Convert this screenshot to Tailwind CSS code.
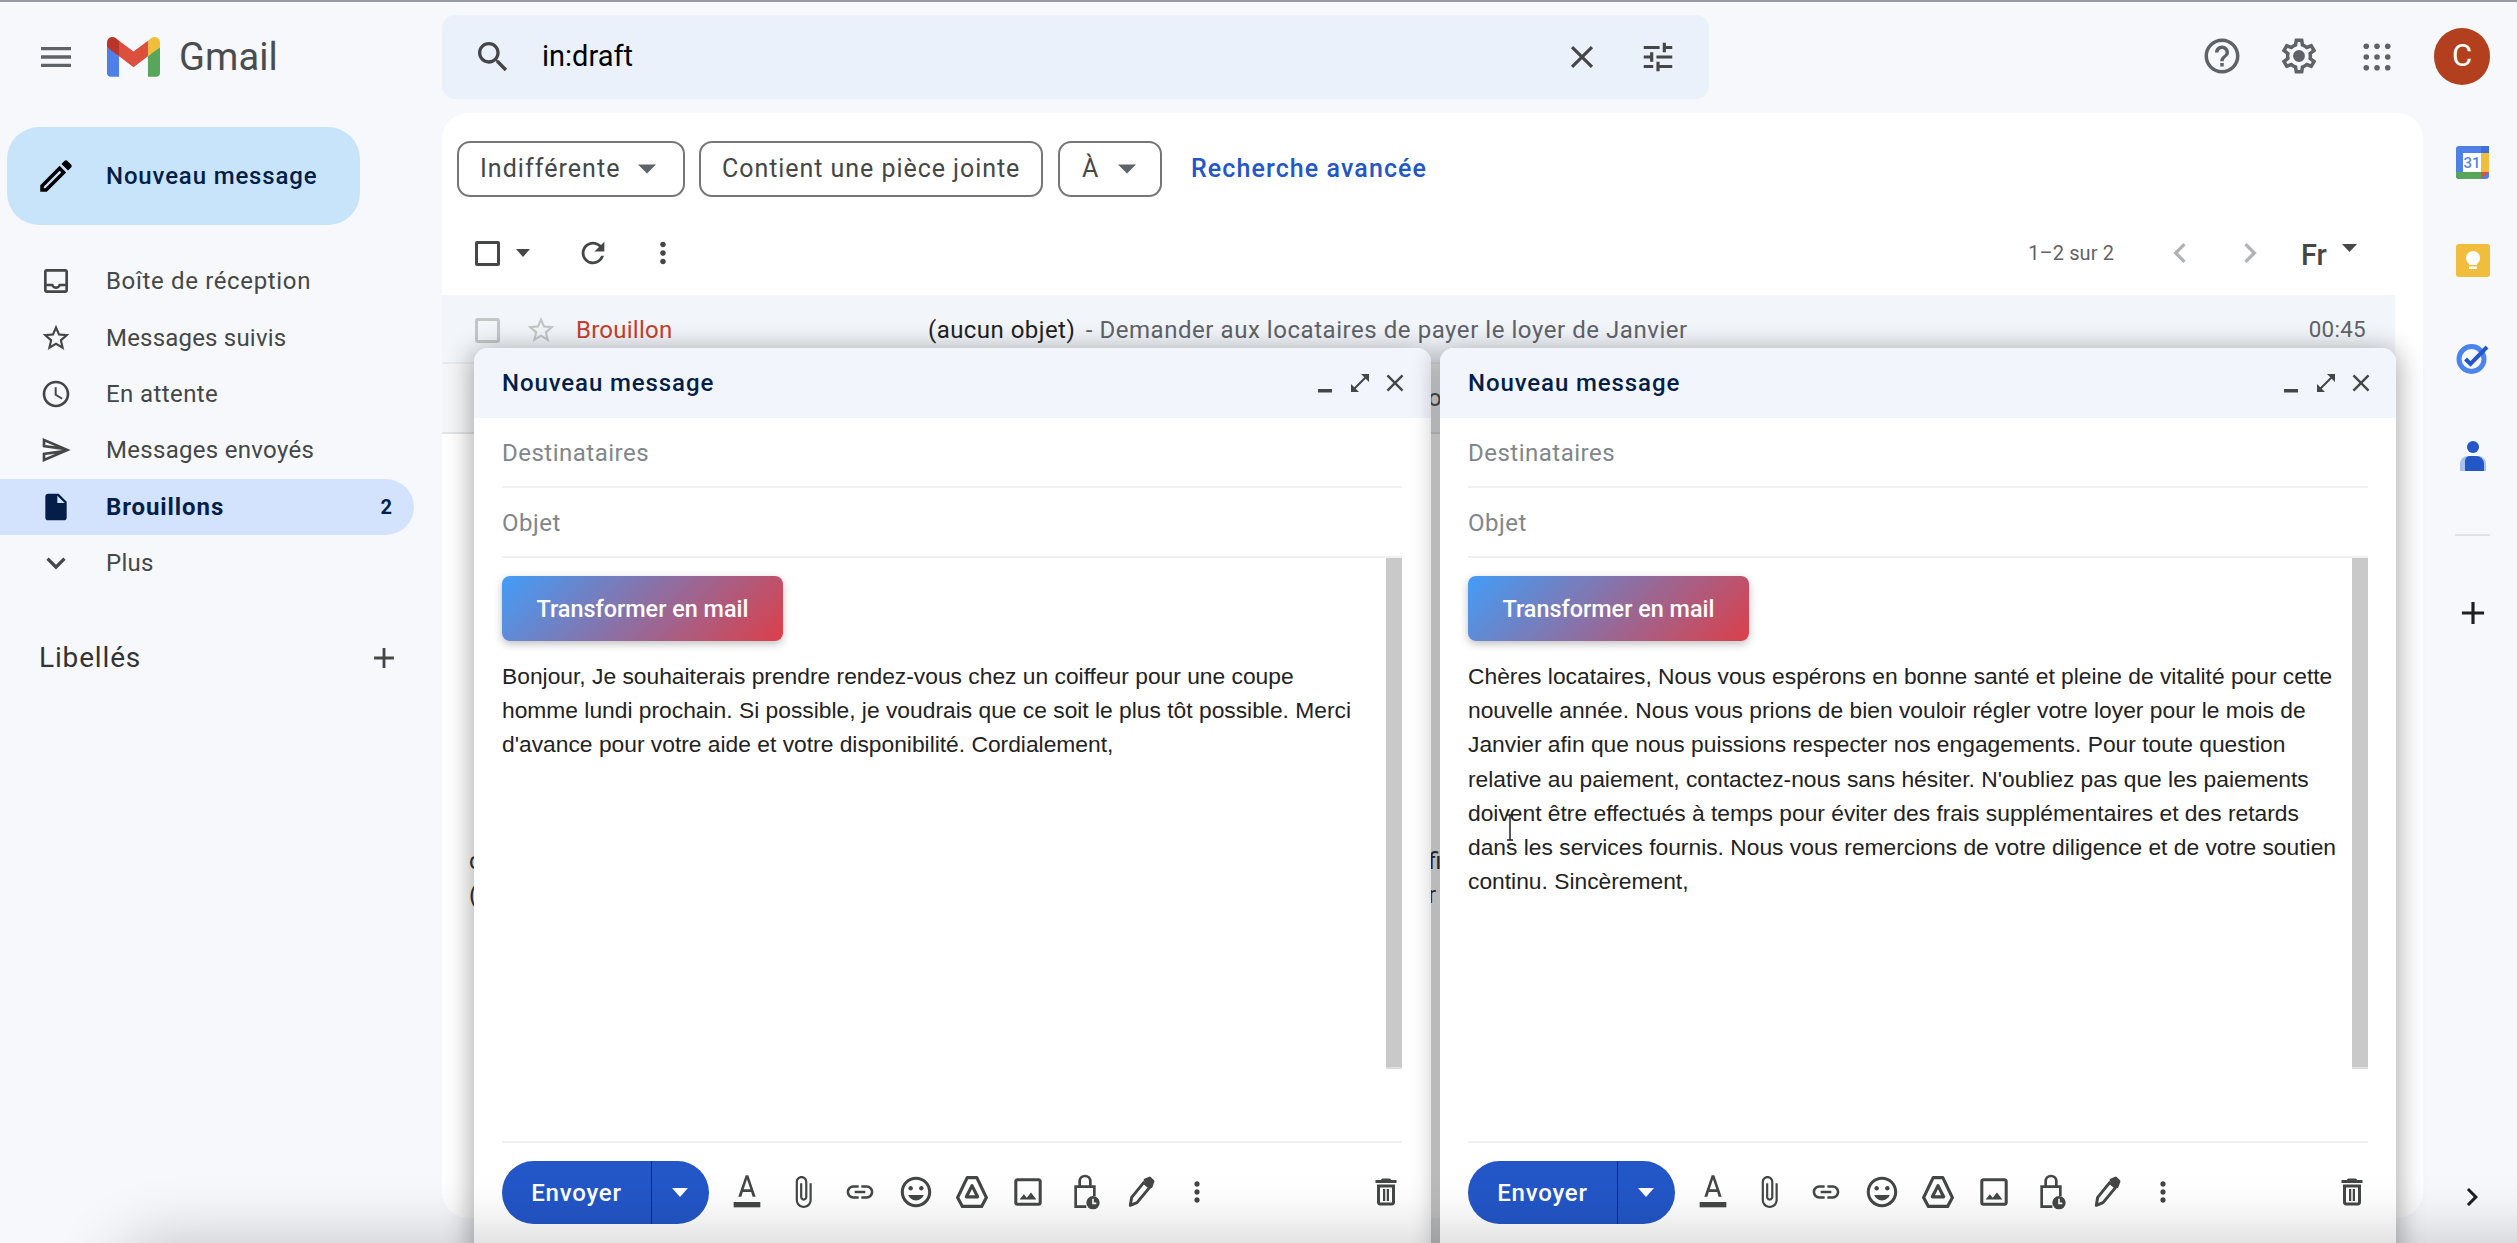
<!DOCTYPE html>
<html lang="fr">
<head>
<meta charset="utf-8">
<title>Gmail</title>
<script src="https://cdn.jsdelivr.net/npm/@tailwindcss/browser@4"></script>
</head>
<body class="m-0">
<div class="relative w-[2517px] h-[1243px] overflow-hidden bg-[#f6f8fc] font-['Roboto',sans-serif] text-[22.4px] text-[#444746]">
  <div class="h-[2px] bg-[#9a9aa2]"></div>

  <!-- top bar -->
  <header class="flex h-[111px]">
    <div class="w-[442px] flex items-center pl-[36px] pb-[2px] shrink-0">
      <svg class="w-[40px] h-[40px] text-[#5f6368]" viewBox="0 0 24 24" fill="currentColor"><path d="M3 18h18v-2H3v2zm0-5h18v-2H3v2zm0-7v2h18V6H3z"/></svg>
      <svg class="w-[53px] h-[40px] ml-[31px]" viewBox="0 0 256 193"><path fill="#4f80e8" d="M58.182 192.05V93.14L27.507 65.077 0 49.504V174.595c0 9.658 7.825 17.455 17.455 17.455h40.727z"/><path fill="#58a55c" d="M197.818 192.05h40.727c9.659 0 17.455-7.826 17.455-17.455V49.504l-31.156 17.837-27.026 25.798v98.911z"/><path fill="#dc4f3d" d="M58.182 93.14l-4.174-38.647 4.174-36.989L128 69.868l69.818-52.364 4.669 34.992-4.669 40.644L128 145.504z"/><path fill="#f1bd3c" d="M197.818 17.504V93.14L256 49.504V26.231c0-21.585-24.64-33.89-41.89-20.945l-16.292 12.218z"/><path fill="#b9352b" d="M0 49.504l26.759 20.07L58.182 93.14V17.504L41.89 5.286C24.61-7.66 0 4.646 0 26.231v23.273z"/></svg>
      <span class="ml-[19px] text-[38px] leading-none text-[#4a4d50] tracking-[0.1px]">Gmail</span>
    </div>
    <div class="mt-[13px] w-[1267px] h-[84px] rounded-[13px] bg-[#eaf1fb] flex items-center pl-[31px] pr-[32px] shrink-0">
      <svg class="w-[40px] h-[40px] text-[#444746]" viewBox="0 0 24 24" fill="currentColor"><path d="M15.5 14h-.79l-.28-.27C15.41 12.59 16 11.11 16 9.5 16 5.91 13.09 3 9.5 3S3 5.91 3 9.5 5.91 16 9.5 16c1.61 0 3.09-.59 4.23-1.57l.27.28v.79l5 4.99L20.49 19l-4.99-5zm-6 0C7.01 14 5 11.99 5 9.5S7.01 5 9.5 5 14 7.01 14 9.5 11.99 14 9.5 14z"/></svg>
      <span class="ml-[29px] text-[29px] text-black">in:draft</span>
      <svg class="ml-auto w-[38px] h-[38px] text-[#444746]" viewBox="0 0 24 24" fill="currentColor"><path d="M19 6.41L17.59 5 12 10.59 6.41 5 5 6.41 10.59 12 5 17.59 6.41 19 12 13.41 17.59 19 19 17.59 13.41 12z"/></svg>
      <svg class="ml-[38px] w-[38px] h-[38px] text-[#444746]" viewBox="0 0 24 24" fill="currentColor"><path d="M3 17v2h6v-2H3zM3 5v2h10V5H3zm10 16v-2h8v-2h-8v-2h-2v6h2zM7 9v2H3v2h4v2h2V9H7zm14 4v-2H11v2h10zm-6-4h2V7h4V5h-4V3h-2v6z"/></svg>
    </div>
    <div class="flex-1 relative">
      <svg class="absolute left-[492px] top-[33px] w-[42px] h-[42px] text-[#5f6368]" viewBox="0 0 24 24" fill="currentColor"><path d="M11 18h2v-2h-2v2zm1-16C6.48 2 2 6.48 2 12s4.48 10 10 10 10-4.48 10-10S17.52 2 12 2zm0 18c-4.41 0-8-3.59-8-8s3.59-8 8-8 8 3.59 8 8-3.59 8-8 8zm0-14c-2.21 0-4 1.79-4 4h2c0-1.1.9-2 2-2s2 .9 2 2c0 2-3 1.75-3 5h2c0-2.25 3-2.5 3-5 0-2.21-1.79-4-4-4z"/></svg>
      <svg class="absolute left-[569px] top-[33px] w-[42px] h-[42px] text-[#5f6368]" viewBox="0 0 24 24" fill="currentColor"><path d="M19.43 12.98c.04-.32.07-.64.07-.98 0-.34-.03-.66-.07-.98l2.11-1.65c.19-.15.24-.42.12-.64l-2-3.46c-.09-.16-.26-.25-.44-.25-.06 0-.12.01-.17.03l-2.49 1c-.52-.4-1.08-.73-1.69-.98l-.38-2.65C14.46 2.18 14.25 2 14 2h-4c-.25 0-.46.18-.49.42l-.38 2.65c-.61.25-1.17.59-1.69.98l-2.49-1c-.06-.02-.12-.03-.18-.03-.17 0-.34.09-.43.25l-2 3.46c-.13.22-.07.49.12.64l2.11 1.65c-.04.32-.07.65-.07.98 0 .33.03.66.07.98l-2.11 1.65c-.19.15-.24.42-.12.64l2 3.46c.09.16.26.25.44.25.06 0 .12-.01.17-.03l2.49-1c.52.4 1.08.73 1.69.98l.38 2.65c.03.24.24.42.49.42h4c.25 0 .46-.18.49-.42l.38-2.65c.61-.25 1.17-.59 1.69-.98l2.49 1c.06.02.12.03.18.03.17 0 .34-.09.43-.25l2-3.46c.12-.22.07-.49-.12-.64l-2.11-1.65zm-1.98-1.71c.04.31.05.52.05.73 0 .21-.02.43-.05.73l-.14 1.13.89.7 1.08.84-.7 1.21-1.27-.51-1.04-.42-.9.68c-.43.32-.84.56-1.25.73l-1.06.43-.16 1.13-.2 1.35h-1.4l-.19-1.35-.16-1.13-1.06-.43c-.43-.18-.83-.41-1.23-.71l-.91-.7-1.06.43-1.27.51-.7-1.21 1.08-.84.89-.7-.14-1.13c-.03-.31-.05-.54-.05-.74s.02-.43.05-.73l.14-1.13-.89-.7-1.08-.84.7-1.21 1.27.51 1.04.42.9-.68c.43-.32.84-.56 1.25-.73l1.06-.43.16-1.13.2-1.35h1.39l.19 1.35.16 1.13 1.06.43c.43.18.83.41 1.23.71l.91.7 1.06-.43 1.27-.51.7 1.21-1.07.85-.89.7.14 1.13zM12 8.6a3.4 3.4 0 1 0 0 6.8 3.4 3.4 0 0 0 0-6.8z"/></svg>
      <svg class="absolute left-[654px] top-[41px] w-[28px] h-[28px] text-[#5f6368]" viewBox="0 0 30 30" fill="currentColor"><circle cx="3.5" cy="3.5" r="3"/><circle cx="15" cy="3.5" r="3"/><circle cx="26.5" cy="3.5" r="3"/><circle cx="3.5" cy="15" r="3"/><circle cx="15" cy="15" r="3"/><circle cx="26.5" cy="15" r="3"/><circle cx="3.5" cy="26.5" r="3"/><circle cx="15" cy="26.5" r="3"/><circle cx="26.5" cy="26.5" r="3"/></svg>
      <div class="absolute left-[725px] top-[26px] w-[56px] h-[57px] rounded-full bg-[#b23f1d] text-white flex items-center justify-center text-[31px]">C</div>
    </div>
  </header>

  <div class="flex h-[1105px]">
    <!-- sidebar -->
    <aside class="w-[442px] shrink-0 pt-[14px]">
      <div class="ml-[7px] w-[353px] h-[98px] rounded-[32px] bg-[#c8e4fb] flex items-center pl-[28px] text-[#041e49] font-medium">
        <svg class="w-[42px] h-[42px] text-black" viewBox="0 0 24 24" fill="currentColor"><path d="M14.06 9.02l.92.92L5.92 19H5v-.92l9.06-9.06M17.66 3c-.25 0-.51.1-.7.29l-1.83 1.83 3.75 3.75 1.83-1.83c.39-.39.39-1.02 0-1.41l-2.34-2.34c-.2-.2-.45-.29-.71-.29zm-3.6 3.19L3 17.25V21h3.75L17.81 9.94l-3.75-3.75z"/></svg>
        <span class="ml-[29px] text-[24px] tracking-[0.85px]">Nouveau message</span>
      </div>
      <nav class="mt-[28px] pr-[28px]">
        <div class="flex items-center h-[56.4px] pl-[40px] text-[#444746]"><svg class="w-[32px] h-[32px]" viewBox="0 0 24 24" fill="currentColor"><path d="M19 3H5c-1.1 0-2 .9-2 2v14c0 1.1.9 2 2 2h14c1.1 0 2-.9 2-2V5c0-1.1-.9-2-2-2zm0 16H5v-3h3.56c.69 1.19 1.97 2 3.45 2s2.75-.81 3.44-2H19v3zm0-5h-4.99c0 1.1-.9 2-2 2s-2-.9-2-2H5V5h14v9z"/></svg><span class="ml-[34px] text-[24px] tracking-[0.65px]">Boîte de réception</span></div>
        <div class="flex items-center h-[56.4px] pl-[40px] text-[#444746]"><svg class="w-[32px] h-[32px]" viewBox="0 0 24 24" fill="currentColor"><path d="M22 9.24l-7.19-.62L12 2 9.19 8.63 2 9.24l5.46 4.73L5.82 21 12 17.27 18.18 21l-1.63-7.03L22 9.24zM12 15.4l-3.76 2.27 1-4.28-3.32-2.88 4.38-.38L12 6.1l1.71 4.04 4.38.38-3.32 2.88 1 4.28L12 15.4z"/></svg><span class="ml-[34px] text-[24px] tracking-[0.2px]">Messages suivis</span></div>
        <div class="flex items-center h-[56.4px] pl-[40px] text-[#444746]"><svg class="w-[32px] h-[32px]" viewBox="0 0 24 24" fill="currentColor"><path d="M11.99 2C6.47 2 2 6.48 2 12s4.47 10 9.99 10C17.52 22 22 17.52 22 12S17.52 2 11.99 2zM12 20c-4.42 0-8-3.58-8-8s3.58-8 8-8 8 3.58 8 8-3.58 8-8 8zm.5-13H11v6l5.25 3.15.75-1.23-4.5-2.67z"/></svg><span class="ml-[34px] text-[24px] tracking-[0.4px]">En attente</span></div>
        <div class="flex items-center h-[56.4px] pl-[40px] text-[#444746]"><svg class="w-[32px] h-[32px]" viewBox="0 0 24 24" fill="currentColor"><path d="M4.01 6.03l7.51 3.22-7.52-1 .01-2.22m7.5 8.72L4 17.97v-2.22l7.51-1M2.01 3L2 10l15 2-15 2 .01 7L23 12 2.01 3z"/></svg><span class="ml-[34px] text-[24px] tracking-[0.3px]">Messages envoyés</span></div>
        <div class="flex items-center h-[56.4px] pl-[40px] pr-[22px] rounded-r-full bg-[#d3e3fd] text-[#041e49] font-bold"><svg class="w-[32px] h-[32px]" viewBox="0 0 24 24" fill="currentColor"><path d="M6 2c-1.1 0-2 .9-2 2v16c0 1.1.9 2 2 2h12c1.1 0 2-.9 2-2V8l-6-6H6zm7 7V3.5L18.5 9H13z"/></svg><span class="ml-[34px] text-[24px] tracking-[0.9px]">Brouillons</span><span class="ml-auto text-[20px]">2</span></div>
        <div class="flex items-center h-[56.4px] pl-[40px] text-[#444746]"><svg class="w-[32px] h-[32px]" viewBox="2 2 20 20" fill="currentColor"><path d="M16.59 8.59L12 13.17 7.41 8.59 6 10l6 6 6-6z"/></svg><span class="ml-[34px] text-[24px] tracking-[0.3px]">Plus</span></div>
      </nav>
      <div class="mt-[47px] pl-[39px] pr-[42px] flex items-center justify-between h-[40px]">
        <span class="text-[28px] tracking-[0.85px] text-[#333]">Libellés</span>
        <svg class="w-[34px] h-[34px] text-[#444746] mr-[-1px]" viewBox="0 0 24 24" fill="currentColor"><path d="M19 13h-6v6h-2v-6H5v-2h6V5h2v6h6v2z"/></svg>
      </div>
    </aside>

    <!-- main panel -->
    <main class="relative w-[1981px] h-[1105px] bg-white rounded-[26px] shrink-0">
      <div class="flex items-center pt-[28px] pl-[15px] gap-[14px]">
        <div class="w-[228px] h-[56px] rounded-[13px] border-2 border-[#747775] flex items-center pl-[21px] tracking-[1.05px] text-[25px] whitespace-nowrap">Indifférente<svg class="ml-[18px] w-[18px] h-[10px] text-[#5f6368]" viewBox="0 0 20 10" fill="currentColor"><path d="M0 0h20L10 10z"/></svg></div>
        <div class="w-[344px] h-[56px] rounded-[13px] border-2 border-[#747775] flex items-center pl-[21px] tracking-[0.95px] text-[25px] whitespace-nowrap">Contient une pièce jointe</div>
        <div class="w-[104px] h-[56px] ml-[1px] rounded-[13px] border-2 border-[#747775] flex items-center pl-[22px] text-[25px]">À<svg class="ml-[20px] w-[18px] h-[10px] text-[#5f6368]" viewBox="0 0 20 10" fill="currentColor"><path d="M0 0h20L10 10z"/></svg></div>
        <span class="ml-[15px] text-[#2356c7] font-medium text-[25px] tracking-[1.1px]">Recherche avancée</span>
      </div>
      <div class="flex items-center h-[42px] mt-[35px] pl-[33px] relative">
        <div class="w-[25px] h-[25px] rounded-[2px] border-[3px] border-[#444746]"></div>
        <svg class="ml-[16px] w-[14px] h-[8px] text-[#444746]" viewBox="0 0 14 8" fill="currentColor"><path d="M0 0h14L7 8z"/></svg>
        <svg class="ml-[46px] w-[34px] h-[34px] text-[#444746]" viewBox="0 0 24 24" fill="currentColor"><path d="M17.65 6.35C16.2 4.9 14.21 4 12 4c-4.42 0-7.99 3.58-7.99 8s3.57 8 7.99 8c3.73 0 6.84-2.55 7.73-6h-2.08c-.82 2.33-3.04 4-5.65 4-3.31 0-6-2.69-6-6s2.69-6 6-6c1.66 0 3.14.69 4.22 1.78L13 11h7V4l-2.35 2.35z"/></svg>
        <svg class="ml-[36px] w-[34px] h-[34px] text-[#444746]" viewBox="0 0 24 24" fill="currentColor"><path d="M12 8c1.1 0 2-.9 2-2s-.9-2-2-2-2 .9-2 2 .9 2 2 2zm0 2c-1.1 0-2 .9-2 2s.9 2 2 2 2-.9 2-2-.9-2-2-2zm0 6c-1.1 0-2 .9-2 2s.9 2 2 2 2-.9 2-2-.9-2-2-2z"/></svg>
        <span class="ml-auto text-[20px] text-[#5f6368] tracking-[0.1px]">1–2 sur 2</span>
        <svg class="ml-[46px] w-[40px] h-[40px] text-[#b0b3b6]" viewBox="0 0 24 24" fill="currentColor"><path d="M15.41 7.41L14 6l-6 6 6 6 1.41-1.41L10.83 12z"/></svg>
        <svg class="ml-[30px] w-[40px] h-[40px] text-[#b0b3b6]" viewBox="0 0 24 24" fill="currentColor"><path d="M10 6L8.59 7.41 13.17 12l-4.58 4.59L10 18l6-6z"/></svg>
        <span class="ml-[31px] w-[30px] flex items-center text-[29px] font-medium text-[#444746] leading-none whitespace-nowrap mt-[4px]">Fr</span>
        <svg class="ml-[11px] mb-[10px] w-[15px] h-[8px] text-[#444746]" viewBox="0 0 15 8" fill="currentColor"><path d="M0 0h15L7.5 8z"/></svg>
        <span class="w-[66px]"></span>
      </div>
      <div class="mt-[21px] w-[1953px] h-[69px] bg-[#f2f5fa] flex items-center pl-[33px] pt-[3px] border-b-2 border-[#e8eaed]">
        <div class="w-[25px] h-[25px] rounded-[3px] border-[3px] border-[#c4c7c5]"></div>
        <svg class="ml-[25px] w-[32px] h-[32px] text-[#c4c7c5]" viewBox="0 0 24 24" fill="currentColor"><path d="M22 9.24l-7.19-.62L12 2 9.19 8.63 2 9.24l5.46 4.73L5.82 21 12 17.27 18.18 21l-1.63-7.03L22 9.24zM12 15.4l-3.76 2.27 1-4.28-3.32-2.88 4.38-.38L12 6.1l1.71 4.04 4.38.38-3.32 2.88 1 4.28L12 15.4z"/></svg>
        <span class="ml-[19px] w-[352px] text-[#c5402e] text-[24px] tracking-[0.25px]">Brouillon</span>
        <span class="text-[#1f1f1f] text-[24px] tracking-[0.45px]">(aucun objet)</span>
        <span class="ml-[4px] text-[#5f6368] text-[24px] tracking-[0.55px] whitespace-pre"> - Demander aux locataires de payer le loyer de Janvier</span>
        <span class="ml-auto mr-[29px] text-[#5f6368] text-[22.4px] tracking-[0.3px]">00:45</span>
      </div>
      <div class="w-[1953px] h-[70px] bg-[#f5f6f7] border-b-2 border-[#e3e4e6] flex items-center pl-[986px] text-[24px] text-[#555]">oc</div>
      <div class="absolute left-[986px] top-[731px] text-[24px] leading-[34px] text-[#333] whitespace-pre">fi
r</div>
      <div class="absolute left-[27px] top-[731px] text-[24px] leading-[34px] text-[#333] whitespace-pre">c
(</div>
    </main>

    <!-- right rail -->
    <aside class="flex-1 flex flex-col items-center pt-[33px] pl-[5px] relative">
      <svg class="w-[33px] h-[33px]" viewBox="0 0 33 33"><rect width="33" height="33" rx="3" fill="#4f80e8"/><rect x="24" y="7" width="9" height="19" fill="#f1bd3c"/><path d="M0 26h25v7H3a3 3 0 0 1-3-3z" fill="#58a55c"/><path d="M25 26h8l-8 7z" fill="#d9533f"/><rect x="25" width="8" height="7" fill="#3f6fd8"/><rect x="7" y="7" width="18" height="19" fill="#fff"/><text x="16" y="22" text-anchor="middle" font-family="Roboto" font-size="15" font-weight="500" fill="#5b85da">31</text></svg>
      <svg class="w-[34px] h-[33px] mt-[65px]" viewBox="0 0 34 33"><rect width="34" height="33" rx="3" fill="#f1bd3c"/><circle cx="17" cy="14" r="7" fill="#fff"/><rect x="13" y="18" width="8" height="3" fill="#fff"/><rect x="13" y="22.500" width="8" height="2.500" fill="#fff"/></svg>
      <svg class="w-[34px] h-[32px] mt-[65px]" viewBox="0 0 34 32"><circle cx="15.500" cy="17" r="12.500" fill="none" stroke="#4a84ee" stroke-width="5"/><path d="M9.500 17l5 5L31 5" fill="none" stroke="#2356c7" stroke-width="4"/></svg>
      <svg class="w-[26px] h-[30px] mt-[67px]" viewBox="0 0 26 30"><circle cx="13" cy="6" r="6" fill="#2356c7"/><path d="M8 15h10a8 8 0 0 1 8 8v7H0v-7a8 8 0 0 1 8-8z" fill="#a9bff0"/><path d="M10 15h6a8 8 0 0 1 8 8v7H5v-10a5 5 0 0 1 5-5z" fill="#2356c7"/></svg>
      <div class="w-[35px] h-[2px] bg-[#e0e2e6] mt-[63px]"></div>
      <svg class="w-[38px] h-[38px] mt-[58px] text-[#1f1f1f]" viewBox="0 0 24 24" fill="currentColor"><path d="M19 13h-6v6h-2v-6H5v-2h6V5h2v6h6v2z"/></svg>
      <svg class="absolute left-[31px] top-[1066px] w-[36px] h-[36px] text-[#1f1f1f]" viewBox="0 0 24 24" fill="currentColor"><path d="M10 6L8.59 7.41 13.17 12l-4.58 4.59L10 18l6-6z"/></svg>
    </aside>
  </div>

  <!-- compose window 1 -->
  <section class="absolute left-[474px] top-[348px] w-[957px] h-[920px] bg-white rounded-t-[14px] shadow-[0_4px_26px_3px_rgba(0,0,0,0.32)] flex flex-col">
    <div class="h-[70px] shrink-0 bg-[#f2f6fc] rounded-t-[14px] flex items-center pl-[28px] pr-[24px] text-[#041e49] font-medium">
      <span class="text-[24px] tracking-[0.9px]">Nouveau message</span>
      <div class="ml-auto flex items-center gap-[11px] text-[#444746]">
        <svg class="w-[24px] h-[24px]" viewBox="0 0 24 24" fill="currentColor"><rect x="5" y="18" width="14" height="3.500"/></svg>
        <svg class="w-[24px] h-[24px]" viewBox="0 0 24 24" fill="currentColor"><path d="M21 11V3h-8l3.290 3.290-10 10L3 13v8h8l-3.290-3.290 10-10z"/></svg>
        <svg class="w-[24px] h-[24px]" viewBox="2 2 20 20" fill="currentColor"><path d="M19 6.410L17.590 5 12 10.590 6.410 5 5 6.410 10.590 12 5 17.590 6.410 19 12 13.410 17.590 19 19 17.590 13.410 12z"/></svg>
      </div>
    </div>
    <div class="ml-[28px] mr-[29px] h-[70px] pt-[2px] shrink-0 border-b-2 border-[#f0f0f0] flex items-center text-[24px] tracking-[0.5px] text-[#80868b]">Destinataires</div>
    <div class="ml-[28px] mr-[29px] h-[70px] pt-[2px] shrink-0 border-b-2 border-[#f0f0f0] flex items-center text-[24px] tracking-[0.5px] text-[#80868b]">Objet</div>
    <div class="ml-[28px] mr-[29px] h-[511px] shrink-0 flex">
      <div class="flex-1 pt-[18px]">
        <div class="w-[281px] h-[65px] pt-[2px] rounded-[8px] bg-[linear-gradient(135deg,#429df8,#dc3f4a)] shadow-[0_3px_8px_rgba(0,0,0,0.25)] flex items-center justify-center text-white text-[23.4px] font-medium">Transformer en mail</div>
        <p class="mt-[18px] font-['Liberation_Sans',sans-serif] text-[22.8px] leading-[34.2px] text-[#222] whitespace-nowrap">Bonjour, Je souhaiterais prendre rendez-vous chez un coiffeur pour une coupe<br>homme lundi prochain. Si possible, je voudrais que ce soit le plus tôt possible. Merci<br>d'avance pour votre aide et votre disponibilité. Cordialement,</p>
      </div>
      <div class="w-[16px] bg-[#c9c9c9] border-b-2 border-[#dcdcdc]"></div>
    </div>
    <div class="ml-[28px] mr-[29px] mt-[72px] border-t-2 border-[#f0f0f0] pt-[18px] flex items-center">
      <div class="w-[207px] h-[63px] rounded-full bg-[#2356c7] text-white flex items-center font-medium shrink-0">
        <span class="w-[150px] h-full flex items-center justify-center text-[24px] tracking-[0.8px] border-r border-[#0f2c6e]">Envoyer</span>
        <svg class="ml-[20px] w-[16px] h-[9px]" viewBox="0 0 16 9" fill="currentColor"><path d="M0 0h16L8 9z"/></svg>
      </div>
      <div class="flex-1 flex items-center gap-[24.3px] ml-[22px] mb-[2px] text-[#444746]">
        <svg class="w-[32px] h-[36px]" viewBox="0 0 24 27" fill="currentColor"><path d="M2 21h20v4H2z"/><path d="M11 1L5.500 17h2.250l1.120-3.500h6.250l1.120 3.500h2.250L13 1h-2zm-1.500 10.500L12 4l2.500 7.500h-5z"/></svg>
        <svg class="w-[32px] h-[36px]" viewBox="1 0 22 24" fill="currentColor"><path d="M16.500 6v11.500c0 2.210-1.790 4-4 4s-4-1.790-4-4V5c0-1.380 1.120-2.500 2.500-2.500s2.500 1.120 2.500 2.500v10.500c0 .55-.45 1-1 1s-1-.45-1-1V6H10v9.500c0 1.380 1.120 2.500 2.500 2.500s2.500-1.120 2.500-2.500V5c0-2.210-1.790-4-4-4S7 2.790 7 5v12.500c0 3.040 2.460 5.500 5.500 5.500s5.500-2.460 5.500-5.500V6h-1.500z"/></svg>
        <svg class="w-[32px] h-[32px]" viewBox="0 0 24 24" fill="currentColor"><path d="M3.900 12c0-1.710 1.390-3.100 3.100-3.100h4V7H7c-2.760 0-5 2.240-5 5s2.240 5 5 5h4v-1.900H7c-1.710 0-3.100-1.390-3.100-3.100zM8 13h8v-2H8v2zm9-6h-4v1.900h4c1.710 0 3.100 1.390 3.100 3.100s-1.390 3.100-3.100 3.100h-4V17h4c2.760 0 5-2.240 5-5s-2.240-5-5-5z"/></svg>
        <svg class="w-[32px] h-[34px]" viewBox="1.500 1.500 21 21" fill="currentColor"><path d="M11.990 2C6.470 2 2 6.480 2 12s4.470 10 9.990 10C17.520 22 22 17.520 22 12S17.520 2 11.990 2zM12 20c-4.420 0-8-3.580-8-8s3.580-8 8-8 8 3.580 8 8-3.580 8-8 8zm3.500-9c.83 0 1.500-.67 1.500-1.500S16.330 8 15.500 8 14 8.670 14 9.500s.67 1.500 1.500 1.500zm-7 0c.83 0 1.500-.67 1.500-1.500S9.330 8 8.500 8 7 8.670 7 9.500 7.670 11 8.500 11zm3.500 6.500c2.330 0 4.310-1.460 5.110-3.500H6.890c.8 2.040 2.780 3.500 5.110 3.500z"/></svg>
        <svg class="w-[32px] h-[32px]" viewBox="2 2 20 20" fill="none" stroke="currentColor" stroke-width="2" stroke-linejoin="round"><path d="M9 3h6l6 12.500-3 5.500H6l-3-5.500z"/><path d="M12 8l3.500 7h-7z"/></svg>
        <svg class="w-[32px] h-[34px]" viewBox="1.500 1.500 21 21" fill="currentColor"><path d="M19 3H5c-1.100 0-2 .9-2 2v14c0 1.100.9 2 2 2h14c1.100 0 2-.9 2-2V5c0-1.100-.9-2-2-2zm0 16H5V5h14v14zm-5.040-6.710l-2.750 3.540-1.960-2.360L6.500 17h11l-3.540-4.710z"/></svg>
        <svg class="w-[32px] h-[38px]" viewBox="0 0 24 28" fill="none" stroke="currentColor" stroke-width="2"><path d="M8 10V6a4 4 0 0 1 8 0v4"/><path d="M13 25H5V10h14v7"/><circle cx="18" cy="22" r="5" fill="currentColor" stroke="none"/><path d="M18 19v3.500h2.500" stroke="#fff" stroke-width="1.200"/></svg>
        <svg class="w-[32px] h-[34px]" viewBox="0 0 24 24" fill="none" stroke="currentColor" stroke-width="2.200" stroke-linejoin="round"><path d="M4 22l1-6L14 5l4.500 3.500L9 20z"/><path d="M15 3l3.500-1.500L21 4l-1.500 4z" fill="currentColor"/></svg>
        <svg class="w-[32px] h-[32px]" viewBox="0 0 24 24" fill="currentColor"><path d="M12 8c1.100 0 2-.9 2-2s-.9-2-2-2-2 .9-2 2 .9 2 2 2zm0 2c-1.100 0-2 .9-2 2s.9 2 2 2 2-.9 2-2-.9-2-2-2zm0 6c-1.100 0-2 .9-2 2s.9 2 2 2 2-.9 2-2-.9-2-2-2z"/></svg>
        <svg class="ml-auto mr-[-2px] w-[36px] h-[36px]" viewBox="0 0 24 24" fill="currentColor"><path d="M16 9v10H8V9h8m-1.500-6h-5l-1 1H5v2h14V4h-3.500l-1-1zM18 7H6v12c0 1.100.9 2 2 2h8c1.100 0 2-.9 2-2V7z"/><path d="M10 10h1.500v8H10zM12.500 10H14v8h-1.500z"/></svg>
      </div>
    </div>
  </section>

  <!-- compose window 2 -->
  <section class="absolute left-[1440px] top-[348px] w-[956px] h-[920px] bg-white rounded-t-[14px] shadow-[0_4px_26px_3px_rgba(0,0,0,0.32)] flex flex-col">
    <div class="h-[70px] shrink-0 bg-[#f2f6fc] rounded-t-[14px] flex items-center pl-[28px] pr-[23px] text-[#041e49] font-medium">
      <span class="text-[24px] tracking-[0.9px]">Nouveau message</span>
      <div class="ml-auto flex items-center gap-[11px] text-[#444746]">
        <svg class="w-[24px] h-[24px]" viewBox="0 0 24 24" fill="currentColor"><rect x="5" y="18" width="14" height="3.500"/></svg>
        <svg class="w-[24px] h-[24px]" viewBox="0 0 24 24" fill="currentColor"><path d="M21 11V3h-8l3.290 3.290-10 10L3 13v8h8l-3.290-3.290 10-10z"/></svg>
        <svg class="w-[24px] h-[24px]" viewBox="2 2 20 20" fill="currentColor"><path d="M19 6.410L17.590 5 12 10.590 6.410 5 5 6.410 10.590 12 5 17.590 6.410 19 12 13.410 17.590 19 19 17.590 13.410 12z"/></svg>
      </div>
    </div>
    <div class="ml-[28px] mr-[28px] h-[70px] pt-[2px] shrink-0 border-b-2 border-[#f0f0f0] flex items-center text-[24px] tracking-[0.5px] text-[#80868b]">Destinataires</div>
    <div class="ml-[28px] mr-[28px] h-[70px] pt-[2px] shrink-0 border-b-2 border-[#f0f0f0] flex items-center text-[24px] tracking-[0.5px] text-[#80868b]">Objet</div>
    <div class="ml-[28px] mr-[28px] h-[511px] shrink-0 flex">
      <div class="flex-1 pt-[18px]">
        <div class="w-[281px] h-[65px] pt-[2px] rounded-[8px] bg-[linear-gradient(135deg,#429df8,#dc3f4a)] shadow-[0_3px_8px_rgba(0,0,0,0.25)] flex items-center justify-center text-white text-[23.4px] font-medium">Transformer en mail</div>
        <p class="mt-[18px] font-['Liberation_Sans',sans-serif] text-[22.8px] leading-[34.2px] text-[#222] whitespace-nowrap">Chères locataires, Nous vous espérons en bonne santé et pleine de vitalité pour cette<br>nouvelle année. Nous vous prions de bien vouloir régler votre loyer pour le mois de<br>Janvier afin que nous puissions respecter nos engagements. Pour toute question<br>relative au paiement, contactez-nous sans hésiter. N'oubliez pas que les paiements<br>doivent être effectués à temps pour éviter des frais supplémentaires et des retards<br>dans les services fournis. Nous vous remercions de votre diligence et de votre soutien<br>continu. Sincèrement,</p>
      </div>
      <div class="w-[16px] bg-[#c9c9c9] border-b-2 border-[#dcdcdc]"></div>
    </div>
    <div class="ml-[28px] mr-[28px] mt-[72px] border-t-2 border-[#f0f0f0] pt-[18px] flex items-center">
      <div class="w-[207px] h-[63px] rounded-full bg-[#2356c7] text-white flex items-center font-medium shrink-0">
        <span class="w-[150px] h-full flex items-center justify-center text-[24px] tracking-[0.8px] border-r border-[#0f2c6e]">Envoyer</span>
        <svg class="ml-[20px] w-[16px] h-[9px]" viewBox="0 0 16 9" fill="currentColor"><path d="M0 0h16L8 9z"/></svg>
      </div>
      <div class="flex-1 flex items-center gap-[24.3px] ml-[22px] mb-[2px] text-[#444746]">
        <svg class="w-[32px] h-[36px]" viewBox="0 0 24 27" fill="currentColor"><path d="M2 21h20v4H2z"/><path d="M11 1L5.500 17h2.250l1.120-3.500h6.250l1.120 3.500h2.250L13 1h-2zm-1.500 10.500L12 4l2.500 7.500h-5z"/></svg>
        <svg class="w-[32px] h-[36px]" viewBox="1 0 22 24" fill="currentColor"><path d="M16.500 6v11.500c0 2.210-1.790 4-4 4s-4-1.790-4-4V5c0-1.380 1.120-2.500 2.500-2.500s2.500 1.120 2.500 2.500v10.500c0 .55-.45 1-1 1s-1-.45-1-1V6H10v9.500c0 1.380 1.120 2.500 2.500 2.500s2.500-1.120 2.500-2.500V5c0-2.210-1.790-4-4-4S7 2.790 7 5v12.500c0 3.040 2.460 5.500 5.500 5.500s5.500-2.460 5.500-5.500V6h-1.500z"/></svg>
        <svg class="w-[32px] h-[32px]" viewBox="0 0 24 24" fill="currentColor"><path d="M3.900 12c0-1.710 1.390-3.100 3.100-3.100h4V7H7c-2.760 0-5 2.240-5 5s2.240 5 5 5h4v-1.900H7c-1.710 0-3.100-1.390-3.100-3.100zM8 13h8v-2H8v2zm9-6h-4v1.900h4c1.710 0 3.100 1.390 3.100 3.100s-1.390 3.100-3.100 3.100h-4V17h4c2.760 0 5-2.240 5-5s-2.240-5-5-5z"/></svg>
        <svg class="w-[32px] h-[34px]" viewBox="1.500 1.500 21 21" fill="currentColor"><path d="M11.990 2C6.470 2 2 6.480 2 12s4.470 10 9.990 10C17.520 22 22 17.520 22 12S17.520 2 11.990 2zM12 20c-4.420 0-8-3.580-8-8s3.580-8 8-8 8 3.580 8 8-3.580 8-8 8zm3.500-9c.83 0 1.500-.67 1.500-1.500S16.330 8 15.500 8 14 8.670 14 9.500s.67 1.500 1.500 1.500zm-7 0c.83 0 1.500-.67 1.500-1.500S9.330 8 8.500 8 7 8.670 7 9.500 7.670 11 8.500 11zm3.500 6.500c2.330 0 4.310-1.460 5.110-3.500H6.890c.8 2.040 2.780 3.500 5.110 3.500z"/></svg>
        <svg class="w-[32px] h-[32px]" viewBox="2 2 20 20" fill="none" stroke="currentColor" stroke-width="2" stroke-linejoin="round"><path d="M9 3h6l6 12.500-3 5.500H6l-3-5.500z"/><path d="M12 8l3.500 7h-7z"/></svg>
        <svg class="w-[32px] h-[34px]" viewBox="1.500 1.500 21 21" fill="currentColor"><path d="M19 3H5c-1.100 0-2 .9-2 2v14c0 1.100.9 2 2 2h14c1.100 0 2-.9 2-2V5c0-1.100-.9-2-2-2zm0 16H5V5h14v14zm-5.040-6.710l-2.750 3.540-1.960-2.360L6.500 17h11l-3.540-4.710z"/></svg>
        <svg class="w-[32px] h-[38px]" viewBox="0 0 24 28" fill="none" stroke="currentColor" stroke-width="2"><path d="M8 10V6a4 4 0 0 1 8 0v4"/><path d="M13 25H5V10h14v7"/><circle cx="18" cy="22" r="5" fill="currentColor" stroke="none"/><path d="M18 19v3.500h2.500" stroke="#fff" stroke-width="1.200"/></svg>
        <svg class="w-[32px] h-[34px]" viewBox="0 0 24 24" fill="none" stroke="currentColor" stroke-width="2.200" stroke-linejoin="round"><path d="M4 22l1-6L14 5l4.500 3.500L9 20z"/><path d="M15 3l3.500-1.500L21 4l-1.500 4z" fill="currentColor"/></svg>
        <svg class="w-[32px] h-[32px]" viewBox="0 0 24 24" fill="currentColor"><path d="M12 8c1.100 0 2-.9 2-2s-.9-2-2-2-2 .9-2 2 .9 2 2 2zm0 2c-1.100 0-2 .9-2 2s.9 2 2 2 2-.9 2-2-.9-2-2-2zm0 6c-1.100 0-2 .9-2 2s.9 2 2 2 2-.9 2-2-.9-2-2-2z"/></svg>
        <svg class="ml-auto mr-[-2px] w-[36px] h-[36px]" viewBox="0 0 24 24" fill="currentColor"><path d="M16 9v10H8V9h8m-1.500-6h-5l-1 1H5v2h14V4h-3.500l-1-1zM18 7H6v12c0 1.100.9 2 2 2h8c1.100 0 2-.9 2-2V7z"/><path d="M10 10h1.500v8H10zM12.500 10H14v8h-1.500z"/></svg>
      </div>
    </div>
  </section>

  <!-- text cursor -->
  <svg class="absolute left-[1505px] top-[814px] w-[10px] h-[27px] text-[#222]" viewBox="0 0 10 27" fill="none" stroke="currentColor" stroke-width="1.500"><path d="M2 1h6M5 1v25M2 26h6"/></svg>

  <!-- soft shade along the bottom edge -->
  <div class="absolute left-[130px] right-[-120px] top-[1262px] h-[80px] rounded-[60px] shadow-[0_0_64px_24px_rgba(0,0,0,0.2)] pointer-events-none"></div>
</div>
</body>
</html>
